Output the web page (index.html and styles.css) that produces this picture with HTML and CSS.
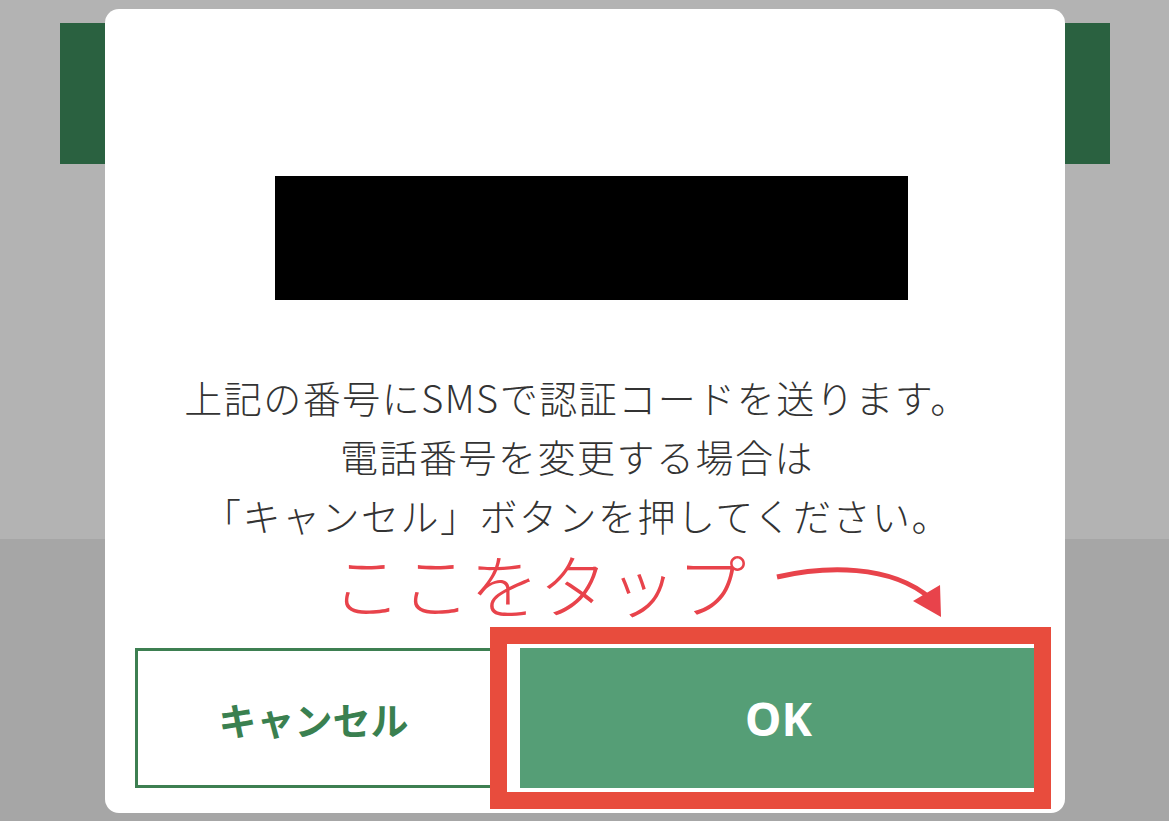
FILE: index.html
```html
<!DOCTYPE html>
<html lang="ja">
<head>
<meta charset="utf-8">
<title>SMS認証</title>
<link rel="stylesheet" href="styles.css">
</head>
<body>
<div class="page">
  <div class="page-top">
    <div class="header-bar"></div>
  </div>
  <div class="page-bottom"></div>

  <div class="modal">
    <div class="masked"></div>
    <p class="message">上記の番号にSMSで認証コードを送ります。<br>電話番号を変更する場合は<br>「キャンセル」ボタンを押してください。</p>
    <div class="actions">
      <button class="btn btn-cancel">キャンセル</button>
      <button class="btn btn-ok">OK</button>
    </div>

    <div class="note-text">ここをタップ</div>
    <svg class="note-arrow" width="180" height="74" viewBox="0 0 180 74">
      <path d="M7 17 C 55 6, 120 4, 160 38" fill="none" stroke="#e8434b" stroke-width="5" stroke-linecap="butt"/>
      <polygon points="143,41 170,25 171,57" fill="#e8434b"/>
    </svg>
    <div class="note-box"></div>
  </div>
</div>
</body>
</html>
```

FILE: styles.css
```css
* { box-sizing: border-box; }
html, body { margin: 0; padding: 0; }
body {
  width: 1169px;
  height: 821px;
  overflow: hidden;
  font-family: "Noto Sans CJK JP", "Noto Sans", sans-serif;
}
.page {
  position: relative;
  width: 1169px;
  height: 821px;
  display: flex;
  flex-direction: column;
}
.page-top {
  height: 539px;
  background: #b3b3b3;
  padding: 23px 59px 0 60px;
}
.header-bar {
  height: 141px;
  background: #2a6140;
}
.page-bottom {
  flex: 1;
  background: #a6a6a6;
}
.modal {
  position: absolute;
  left: 105px;
  top: 9px;
  width: 960px;
  height: 804px;
  background: #ffffff;
  border-radius: 14px;
  padding: 0 30px 25px;
  display: flex;
  flex-direction: column;
}
.masked {
  margin: 167px 0 0 140px;
  width: 633px;
  height: 124px;
  background: #000000;
}
.message {
  margin: 67px 0 0;
  padding-right: 16px;
  text-align: center;
  font-size: 38px;
  line-height: 59px;
  letter-spacing: 1.5px;
  color: #333333;
  font-weight: 300;
}
.actions {
  margin-top: auto;
  display: flex;
  height: 140px;
  gap: 20px;
}
.btn {
  border: none;
  margin: 0;
  padding: 0;
  font-weight: 700;
  cursor: pointer;
}
.btn-cancel {
  width: 365px;
  background: #ffffff;
  border: 3px solid #3d7f51;
  color: #3a8050;
  font-family: "Noto Sans CJK JP", sans-serif;
  font-size: 38px;
  padding-left: 0;
  padding-right: 8px;
}
.btn-ok {
  flex: 1;
  margin-right: -2px;
  background: #559e76;
  color: #ffffff;
  font-family: "Noto Sans", "Noto Sans CJK JP", sans-serif;
  font-size: 46px;
}
.note-text {
  position: absolute;
  left: 227px;
  top: 540px;
  font-size: 69px;
  line-height: 68px;
  color: #e8434b;
  font-weight: 300;
}
.note-arrow {
  position: absolute;
  left: 665px;
  top: 551px;
}
.note-box {
  position: absolute;
  left: 385px;
  top: 618px;
  width: 561px;
  height: 182px;
  border: 17px solid #e84c3d;
}
```
